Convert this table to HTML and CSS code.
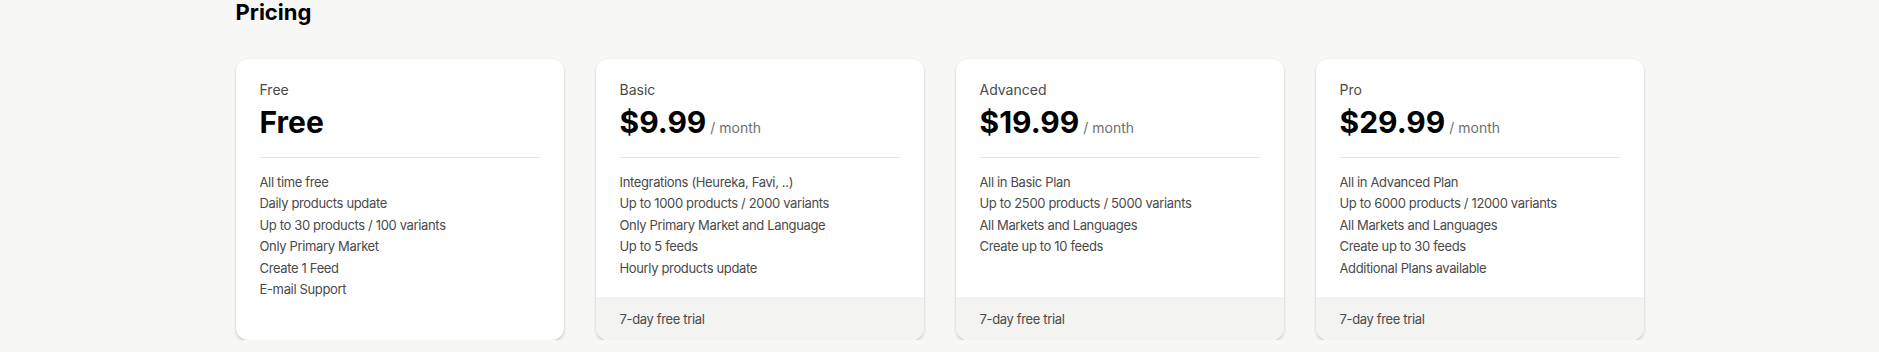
FILE: index.html
```html
<!DOCTYPE html>
<html lang="en">
<head>
<meta charset="utf-8">
<title>Pricing</title>
<link rel="stylesheet" href="styles.css">
</head>
<body>
<main class="page">
  <h1 class="page-title">Pricing</h1>
  <div class="plans">
    <section class="plan">
      <div class="plan-body">
        <div class="plan-name">Free</div>
        <div class="plan-price"><span class="amount">Free</span></div>
        <hr class="divider">
        <ul class="features">
          <li>All time free</li>
          <li>Daily products update</li>
          <li>Up to 30 products / 100 variants</li>
          <li>Only Primary Market</li>
          <li>Create 1 Feed</li>
          <li>E-mail Support</li>
        </ul>
      </div>
    </section>
    <section class="plan">
      <div class="plan-body">
        <div class="plan-name">Basic</div>
        <div class="plan-price"><span class="amount">$9.99</span><span class="period">/ month</span></div>
        <hr class="divider">
        <ul class="features">
          <li>Integrations (Heureka, Favi, ..)</li>
          <li>Up to 1000 products / 2000 variants</li>
          <li>Only Primary Market and Language</li>
          <li>Up to 5 feeds</li>
          <li>Hourly products update</li>
        </ul>
      </div>
      <div class="plan-footer">7-day free trial</div>
    </section>
    <section class="plan">
      <div class="plan-body">
        <div class="plan-name">Advanced</div>
        <div class="plan-price"><span class="amount">$19.99</span><span class="period">/ month</span></div>
        <hr class="divider">
        <ul class="features">
          <li>All in Basic Plan</li>
          <li>Up to 2500 products / 5000 variants</li>
          <li>All Markets and Languages</li>
          <li>Create up to 10 feeds</li>
        </ul>
      </div>
      <div class="plan-footer">7-day free trial</div>
    </section>
    <section class="plan">
      <div class="plan-body">
        <div class="plan-name">Pro</div>
        <div class="plan-price"><span class="amount">$29.99</span><span class="period">/ month</span></div>
        <hr class="divider">
        <ul class="features">
          <li>All in Advanced Plan</li>
          <li>Up to 6000 products / 12000 variants</li>
          <li>All Markets and Languages</li>
          <li>Create up to 30 feeds</li>
          <li>Additional Plans available</li>
        </ul>
      </div>
      <div class="plan-footer">7-day free trial</div>
    </section>
  </div>
</main>
</body>
</html>
```

FILE: styles.css
```css
* {
  box-sizing: border-box;
}

html, body {
  margin: 0;
  padding: 0;
}

body {
  background: #f7f7f6;
  font-family: Inter, "Noto Sans", sans-serif;
  color: #303030;
  -webkit-font-smoothing: antialiased;
}

.page {
  width: 1408px;
  margin: 0 auto;
}

.page-title {
  margin: 0;
  font-size: 22px;
  line-height: 24px;
  font-weight: 700;
  color: #000;
}

.plans {
  margin-top: 35px;
  display: grid;
  grid-template-columns: repeat(4, 1fr);
  gap: 32px;
  align-items: stretch;
}

.plan {
  background: #fff;
  border-radius: 12px;
  overflow: hidden;
  display: flex;
  flex-direction: column;
  box-shadow: 0 0 0 1px rgba(0, 0, 0, 0.015), 0 1px 1px rgba(0, 0, 0, 0.06), 0 2px 4px -1px rgba(0, 0, 0, 0.22);
}

.plan-body {
  padding: 21px 24px 18px;
  flex: 1;
}

.plan-name {
  font-size: 14px;
  line-height: 20px;
  color: #4a4a4a;
}

.plan-price {
  margin-top: 3px;
  display: flex;
  align-items: baseline;
  gap: 4px;
}

.amount {
  font-size: 30px;
  line-height: 38px;
  font-weight: 700;
  color: #000;
}

.period {
  font-size: 14px;
  line-height: 20px;
  color: #6f6f6f;
}

.divider {
  margin: 16px 0 14px;
  border: 0;
  border-top: 1px solid #e3e3e3;
}

.features {
  list-style: none;
  margin: 0;
  padding: 0;
}

.features li {
  font-size: 13px;
  line-height: 21.4px;
  letter-spacing: -0.35px;
  color: #4a4a4a;
}

.plan-footer {
  background: #f3f3f2;
  padding: 12px 24px 11px;
  font-size: 13px;
  line-height: 20px;
  letter-spacing: -0.35px;
  color: #4a4a4a;
}
```
